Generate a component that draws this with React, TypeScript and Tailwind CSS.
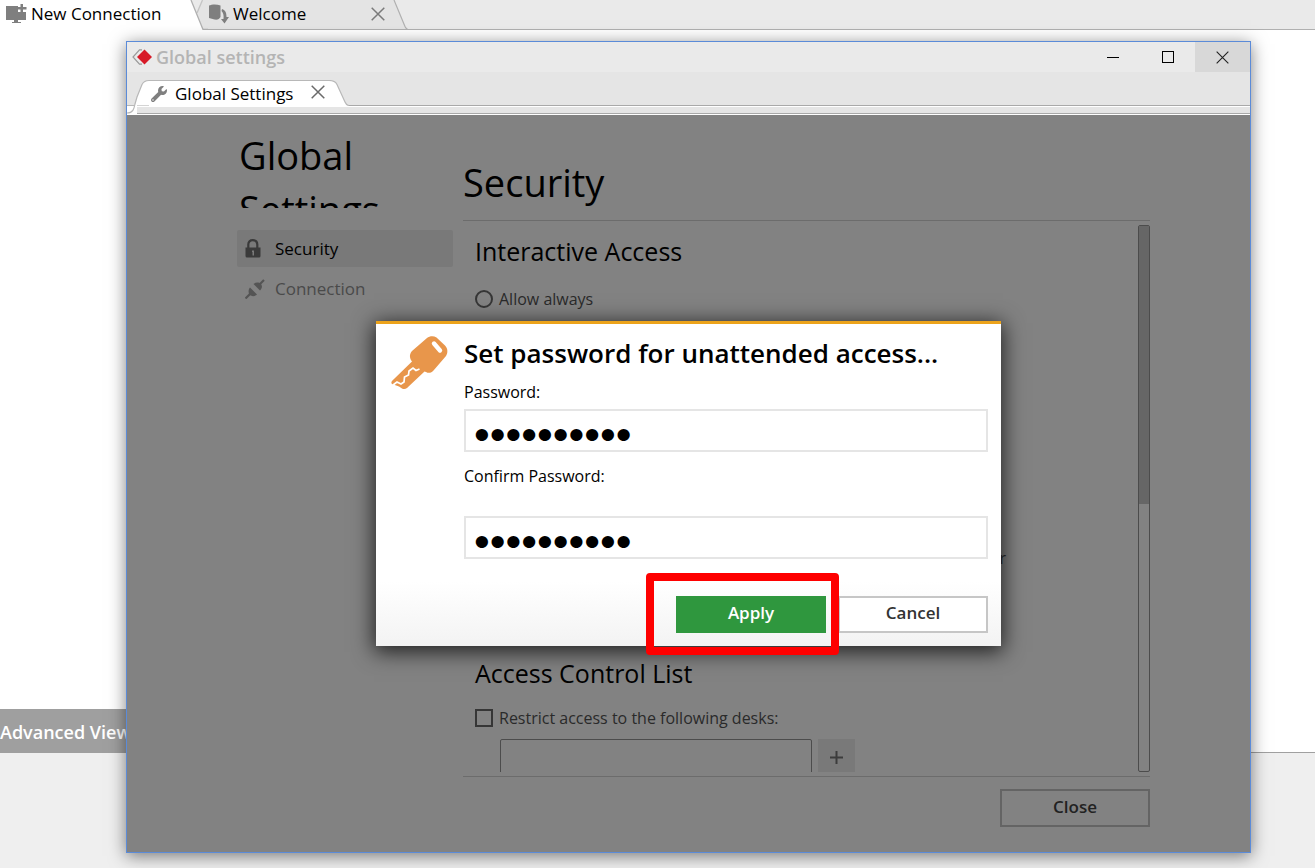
import { useState } from 'react';
import { FaWrench } from 'react-icons/fa';

const NAV_ITEMS = [
  { id: 'security', label: 'Security' },
  { id: 'connection', label: 'Connection' },
];

function MonitorPlusIcon() {
  return (
    <svg width="21" height="20" viewBox="0 0 21 20" fill="#7f7f7f" aria-hidden="true">
      <path d="M0 2h12v6h8v8H0z" />
      <path d="M8 16h4v2h3v1H6v-1h2z" />
      <path d="M12 0h9v8h-9z" fill="#fff" />
      <path d="M14.5 0h2.500v3h3.500v2.500H17v3h-2.500v-3h-3V3h3z" />
    </svg>
  );
}

function WelcomeIcon() {
  return (
    <svg width="21" height="20" viewBox="0 0 21 20" fill="#7f7f7f" aria-hidden="true">
      <path d="M1 1.500C4 0 9 0 12.500 1.500V13c-1 2-3 3-6 2.500L1 14z" />
      <path d="M14 5c3 1 4.500 3 4.500 8H21L16.500 19.500 13 15h2.500c.4-4-.2-6-2-8z" />
    </svg>
  );
}

function CrossIcon({ size, color, width }: { size: number; color: string; width: number }) {
  return (
    <svg width={size} height={size} viewBox="0 0 14 14" stroke={color} strokeWidth={width} fill="none" aria-hidden="true">
      <path d="M.7.7l12.600 12.600M13.300.7L.7 13.300" />
    </svg>
  );
}

function LogoIcon() {
  return (
    <svg width="20" height="16" viewBox="0 0 20 16" aria-hidden="true">
      <path d="M10 .8H7.500L1 8l6.500 7.200H10" fill="none" stroke="#999" strokeWidth="1.200" />
      <path d="M12.500.5L20 8l-7.500 7.500L5 8z" fill="#d71a28" />
    </svg>
  );
}

function LockIcon() {
  return (
    <svg width="16" height="19" viewBox="0 0 16 19" aria-hidden="true">
      <path d="M3.300 9V5.500C3.300 2.800 5 1.200 7.800 1.200s4.500 1.600 4.500 4.300V9" fill="none" stroke="#3a3a3a" strokeWidth="2.200" />
      <path d="M.5 8.500h15V17a1.500 1.500 0 0 1-1.500 1.500H2A1.500 1.500 0 0 1 .5 17z" fill="#3a3a3a" />
      <path d="M7 11.500h2v5H7.500V13H7z" fill="#7a7a7a" />
    </svg>
  );
}

function PlugIcon() {
  return (
    <svg width="20" height="20" viewBox="0 0 20 20" fill="#545454" stroke="#545454" aria-hidden="true">
      <path d="M.5 19.500l5-5M14 6l5-5" strokeWidth="2.200" />
      <path d="M5 8.500l7 7c-2 2-5 2.200-7.200.6-1.600-2-1.600-5.600.2-7.600z" stroke="none" />
      <path d="M8.500 5l6.500 6.500c2.200-1.800 2.500-4.800 1-6.500-2-1.700-5.500-2-7.500 0z" stroke="none" />
    </svg>
  );
}

function KeyIcon() {
  return (
    <svg width="57" height="55" viewBox="0 0 57 55" aria-hidden="true">
      <path
        d="M36 3c2.500-2 6.500-2.500 9.500-.5l8.500 8c3 3 3 7.500 1 10.500L42.500 35.500c-2 2.500-5 3-7.500 1.500l-1.500-.6L16 53c-1.600 1.300-3.500 1.400-5 .4l-3-2L1 49c-1-1-.7-2.200.2-3.200L21 26.500c-2.500-3.500-3-7 0-10.500z"
        fill="#e8964b"
      />
      <path d="M43 8.500l6 7" stroke="#fff" strokeWidth="4.400" strokeLinecap="round" />
      <path d="M2 50l4-3 4 2 3-2 .5-5 4-2 .5-4 4-3 3 2.500 3.500-1.500" fill="none" stroke="#fff" strokeWidth="1.700" />
    </svg>
  );
}

function OuterTabs() {
  return (
    <nav className="flex h-[30px] bg-[#eaeaea] text-[17px] text-black">
      <button className="flex w-[190px] items-center gap-1 bg-white pb-[2px] pl-[6px]">
        <MonitorPlusIcon />
        New Connection
      </button>
      <svg width="18" height="30" viewBox="0 0 18 30" aria-hidden="true">
        <path d="M12 0h6v29h-5L6.500 14z" fill="#e4e4e4" />
        <path d="M0 0h1l12 29v1H0z" fill="#fff" />
        <path d="M12.500 0l-5.500 13" fill="none" stroke="#c4c4c4" strokeWidth="1.300" />
        <path d="M1 0l12 29.500h5" fill="none" stroke="#b0b0b0" strokeWidth="1.300" />
      </svg>
      <div className="flex w-[185px] items-center border-b border-[#b0b0b0] bg-[#e4e4e4] pb-px pr-2">
        <button className="flex flex-1 items-center gap-1">
          <WelcomeIcon />
          Welcome
        </button>
        <button aria-label="Close Welcome">
          <CrossIcon size={14} color="#7a7a7a" width={1.5} />
        </button>
      </div>
      <svg width="15" height="30" viewBox="0 0 15 30" aria-hidden="true">
        <path d="M0 0h1l11 27 3 3H0z" fill="#e4e4e4" />
        <path d="M1 0l11 26.500q1.500 3 3 3M0 29.500h15" fill="none" stroke="#b0b0b0" strokeWidth="1.200" />
      </svg>
      <div className="flex-1 border-b border-[#b0b0b0]" />
    </nav>
  );
}

function TitleBar() {
  return (
    <header className="flex h-[30px] shrink-0 items-center bg-[#eaeaea] pl-[5px]">
      <LogoIcon />
      <span className="flex-1 pl-1 text-[18px] font-semibold text-[#b4b4b4]">Global settings</span>
      <button aria-label="Minimize" className="grid h-full w-[55px] place-items-center">
        <span className="h-px w-3 bg-black" />
      </button>
      <button aria-label="Maximize" className="grid h-full w-[55px] place-items-center">
        <span className="size-3 border border-black" />
      </button>
      <button aria-label="Close window" className="grid h-full w-[55px] place-items-center bg-[#d8d8d8]">
        <CrossIcon size={13} color="#222" width={1.2} />
      </button>
    </header>
  );
}

function WindowTabs() {
  return (
    <>
      <div className="flex h-[34px] shrink-0 items-end border-b border-[#a9a9a9] bg-[#e5e5e5]">
        <svg width="22" height="26" viewBox="0 0 22 26" className="-mb-px overflow-visible" aria-hidden="true">
          <path d="M0 25.500V33h10v-7.500h12V0.500q-5 0-7 4L10 17 7.500 26z" fill="#fff" />
          <path d="M0 25.500h7.500M0 33c6 0 7-4 8-9l2-7 5-12.500q2-4 7-4" fill="none" stroke="#b8b8b8" strokeWidth="1.200" />
        </svg>
        <div className="-mb-px flex h-[26px] w-[180px] items-center border-t border-[#b8b8b8] bg-white">
          <button className="flex flex-1 items-center gap-2 pl-[2px] text-[17px]">
            <FaWrench size={16} color="#7f7f7f" aria-hidden="true" />
            Global Settings
          </button>
          <button aria-label="Close Global Settings" className="pb-1 pr-1">
            <CrossIcon size={14} color="#6a6a6a" width={1.5} />
          </button>
        </div>
        <svg width="20" height="26" viewBox="0 0 20 26" className="-mb-px" aria-hidden="true">
          <path d="M0 .5q6 0 8 4L16 22q1.500 3.500 4 3.500V26H0z" fill="#fff" />
          <path d="M0 .5q6 0 8 4L16 22q1.500 3.500 4 3.500" fill="none" stroke="#b8b8b8" strokeWidth="1.200" />
        </svg>
      </div>
      <div className="ml-[10px] h-[9px] shrink-0 border-y border-white bg-[#e5e5e5]">
        <div className="h-full border-b border-[#a9a9a9]" />
      </div>
    </>
  );
}

function Sidebar() {
  const [active, setActive] = useState('security');
  return (
    <aside className="w-[216px] shrink-0">
      <h1 className="h-[93px] overflow-hidden pl-[2px] pt-[13px] text-[38px] leading-[54px] text-black">Global Settings</h1>
      <nav className="mt-[22px] flex flex-col gap-[3px]">
        {NAV_ITEMS.map((item) => (
          <button key={item.id} onClick={() => setActive(item.id)}
            className={`flex h-[37px] items-center rounded-[2px] pl-2 text-[17px] ${active === item.id ? 'bg-[#797979] text-black' : 'text-[#4a4a4a]'}`}>
            <span className="w-[30px]">{item.id === 'security' ? <LockIcon /> : <PlugIcon />}</span>
            {item.label}
          </button>
        ))}
      </nav>
    </aside>
  );
}

function SecurityPanel() {
  return (
    <main className="flex min-w-0 flex-1 flex-col">
      <h1 className="h-[106px] border-b border-[#6c6c6c] pt-10 text-[38px] leading-[54px] text-black">Security</h1>
      <div className="mb-1 mt-1 flex min-h-0 flex-1">
        <div className="flex min-w-0 flex-1 flex-col overflow-hidden pl-3 pt-2">
          <section className="h-[422px] shrink-0">
            <h2 className="text-[25px] leading-9 text-black">Interactive Access</h2>
            <label className="mt-[18px] flex items-center gap-[6px] text-[16px] leading-6 text-[#2a2a2a]">
              <input type="radio" name="interactive" className="size-[18px] appearance-none rounded-full border-2 border-[#363636]" />
              Allow always
            </label>
            <p className="mt-[235px] pr-[132px] text-right text-[16px] leading-6 text-[#2a2a2a]">r</p>
          </section>
          <section className="shrink-0">
            <h2 className="text-[25px] leading-9 text-black">Access Control List</h2>
            <label className="mt-[15px] flex items-center gap-[6px] text-[16px] leading-6 text-[#2a2a2a]">
              <input type="checkbox" className="size-[18px] appearance-none border-2 border-[#363636]" />
              Restrict access to the following desks:
            </label>
            <div className="mt-[9px] flex gap-[6px] pl-[25px]">
              <textarea aria-label="Allowed desks" className="h-20 w-[312px] resize-none rounded-[2px] border border-[#4c4c4c]" />
              <button aria-label="Add desk" className="grid h-[37px] w-[37px] place-items-center bg-[#797979]">
                <svg width="13" height="13" viewBox="0 0 13 13" stroke="#3c3c3c" strokeWidth="2" aria-hidden="true">
                  <path d="M6.500 0v13M0 6.500h13" />
                </svg>
              </button>
            </div>
          </section>
        </div>
        <div className="w-3 rounded-[2px] border border-[#4c4c4c]">
          <div className="h-[51%] bg-[#666]" />
        </div>
      </div>
      <footer className="flex h-[76px] items-start justify-end border-t border-[#6c6c6c] pt-3">
        <button className="h-[38px] w-[150px] border-2 border-[#646464] pb-[2px] text-[17px] font-semibold text-[#222]">Close</button>
      </footer>
    </main>
  );
}

function PasswordDialog() {
  const [password, setPassword] = useState('anydesk123');
  const [confirm, setConfirm] = useState('anydesk123');
  const inputClass = "block h-[43px] w-full border-2 border-[#e5e5e5] bg-white px-2 pt-2 font-['Liberation_Sans',sans-serif] text-[45px] leading-8 text-black outline-none";
  return (
    <form role="dialog" aria-labelledby="dialog-title" onSubmit={(e) => e.preventDefault()}
      className="flex w-[625px] border-t-[3px] border-[#eca31b] bg-linear-to-b from-white from-80% to-[#f3f3f3] pb-[13px] pl-[15px] pr-[13px] shadow-[0_4px_20px_2px_rgba(0,0,0,0.75)]">
      <div className="w-[73px] shrink-0 pt-[11px]">
        <KeyIcon />
      </div>
      <div className="flex-1">
        <h2 id="dialog-title" className="pb-px pt-[11px] text-[26px] font-semibold leading-9 text-black">Set password for unattended access...</h2>
        <label htmlFor="password" className="mb-[5px] mt-2 block text-[16px] leading-6 text-black">Password:</label>
        <input id="password" type="password" className={inputClass} value={password} onChange={(e) => setPassword(e.target.value)} />
        <label htmlFor="confirm" className="mb-7 mt-3 block text-[16px] leading-6 text-black">Confirm Password:</label>
        <input id="confirm" type="password" className={inputClass} value={confirm} onChange={(e) => setConfirm(e.target.value)} />
        <div className="mt-[37px] flex justify-end gap-3">
          <div className="relative">
            <button type="submit" className="block h-[37px] w-[150px] bg-[#2f973e] pb-1 text-[17px] font-semibold text-white">Apply</button>
            <div className="pointer-events-none absolute -bottom-[22px] -left-[30px] -right-[13px] -top-[23px] z-10 rounded-[4px] border-8 border-[#fe0000]" />
          </div>
          <button type="button" className="h-[37px] w-[150px] border-2 border-[#c6c6c6] bg-white pb-1 text-[17px] font-semibold text-[#333]">Cancel</button>
        </div>
      </div>
    </form>
  );
}

export default function App() {
  return (
    <div className="relative flex min-h-screen flex-col overflow-hidden bg-white font-['Open_Sans',sans-serif]">
      <OuterTabs />
      <div className="flex flex-1 items-end">
        <button className="z-0 -mb-px h-[44px] w-[150px] bg-[#9f9f9f] pt-[2px] text-left text-[18px] font-semibold text-white">Advanced View</button>
      </div>
      <div className="h-[116px] border-t border-[#a0a0a0] bg-[#efefef]" />

      <div className="absolute bottom-[15px] left-[126px] right-[64px] top-[41px] flex flex-col border border-[#5b8bd8] bg-white shadow-[0_3px_16px_rgba(0,0,0,0.5)]">
        <TitleBar />
        <WindowTabs />
        <div className="relative flex min-h-0 flex-1 gap-[10px] bg-[#828282] pl-[110px] pr-[100px]">
          <Sidebar />
          <SecurityPanel />
          <div className="absolute inset-0 grid place-items-center">
            <PasswordDialog />
          </div>
        </div>
      </div>
    </div>
  );
}
